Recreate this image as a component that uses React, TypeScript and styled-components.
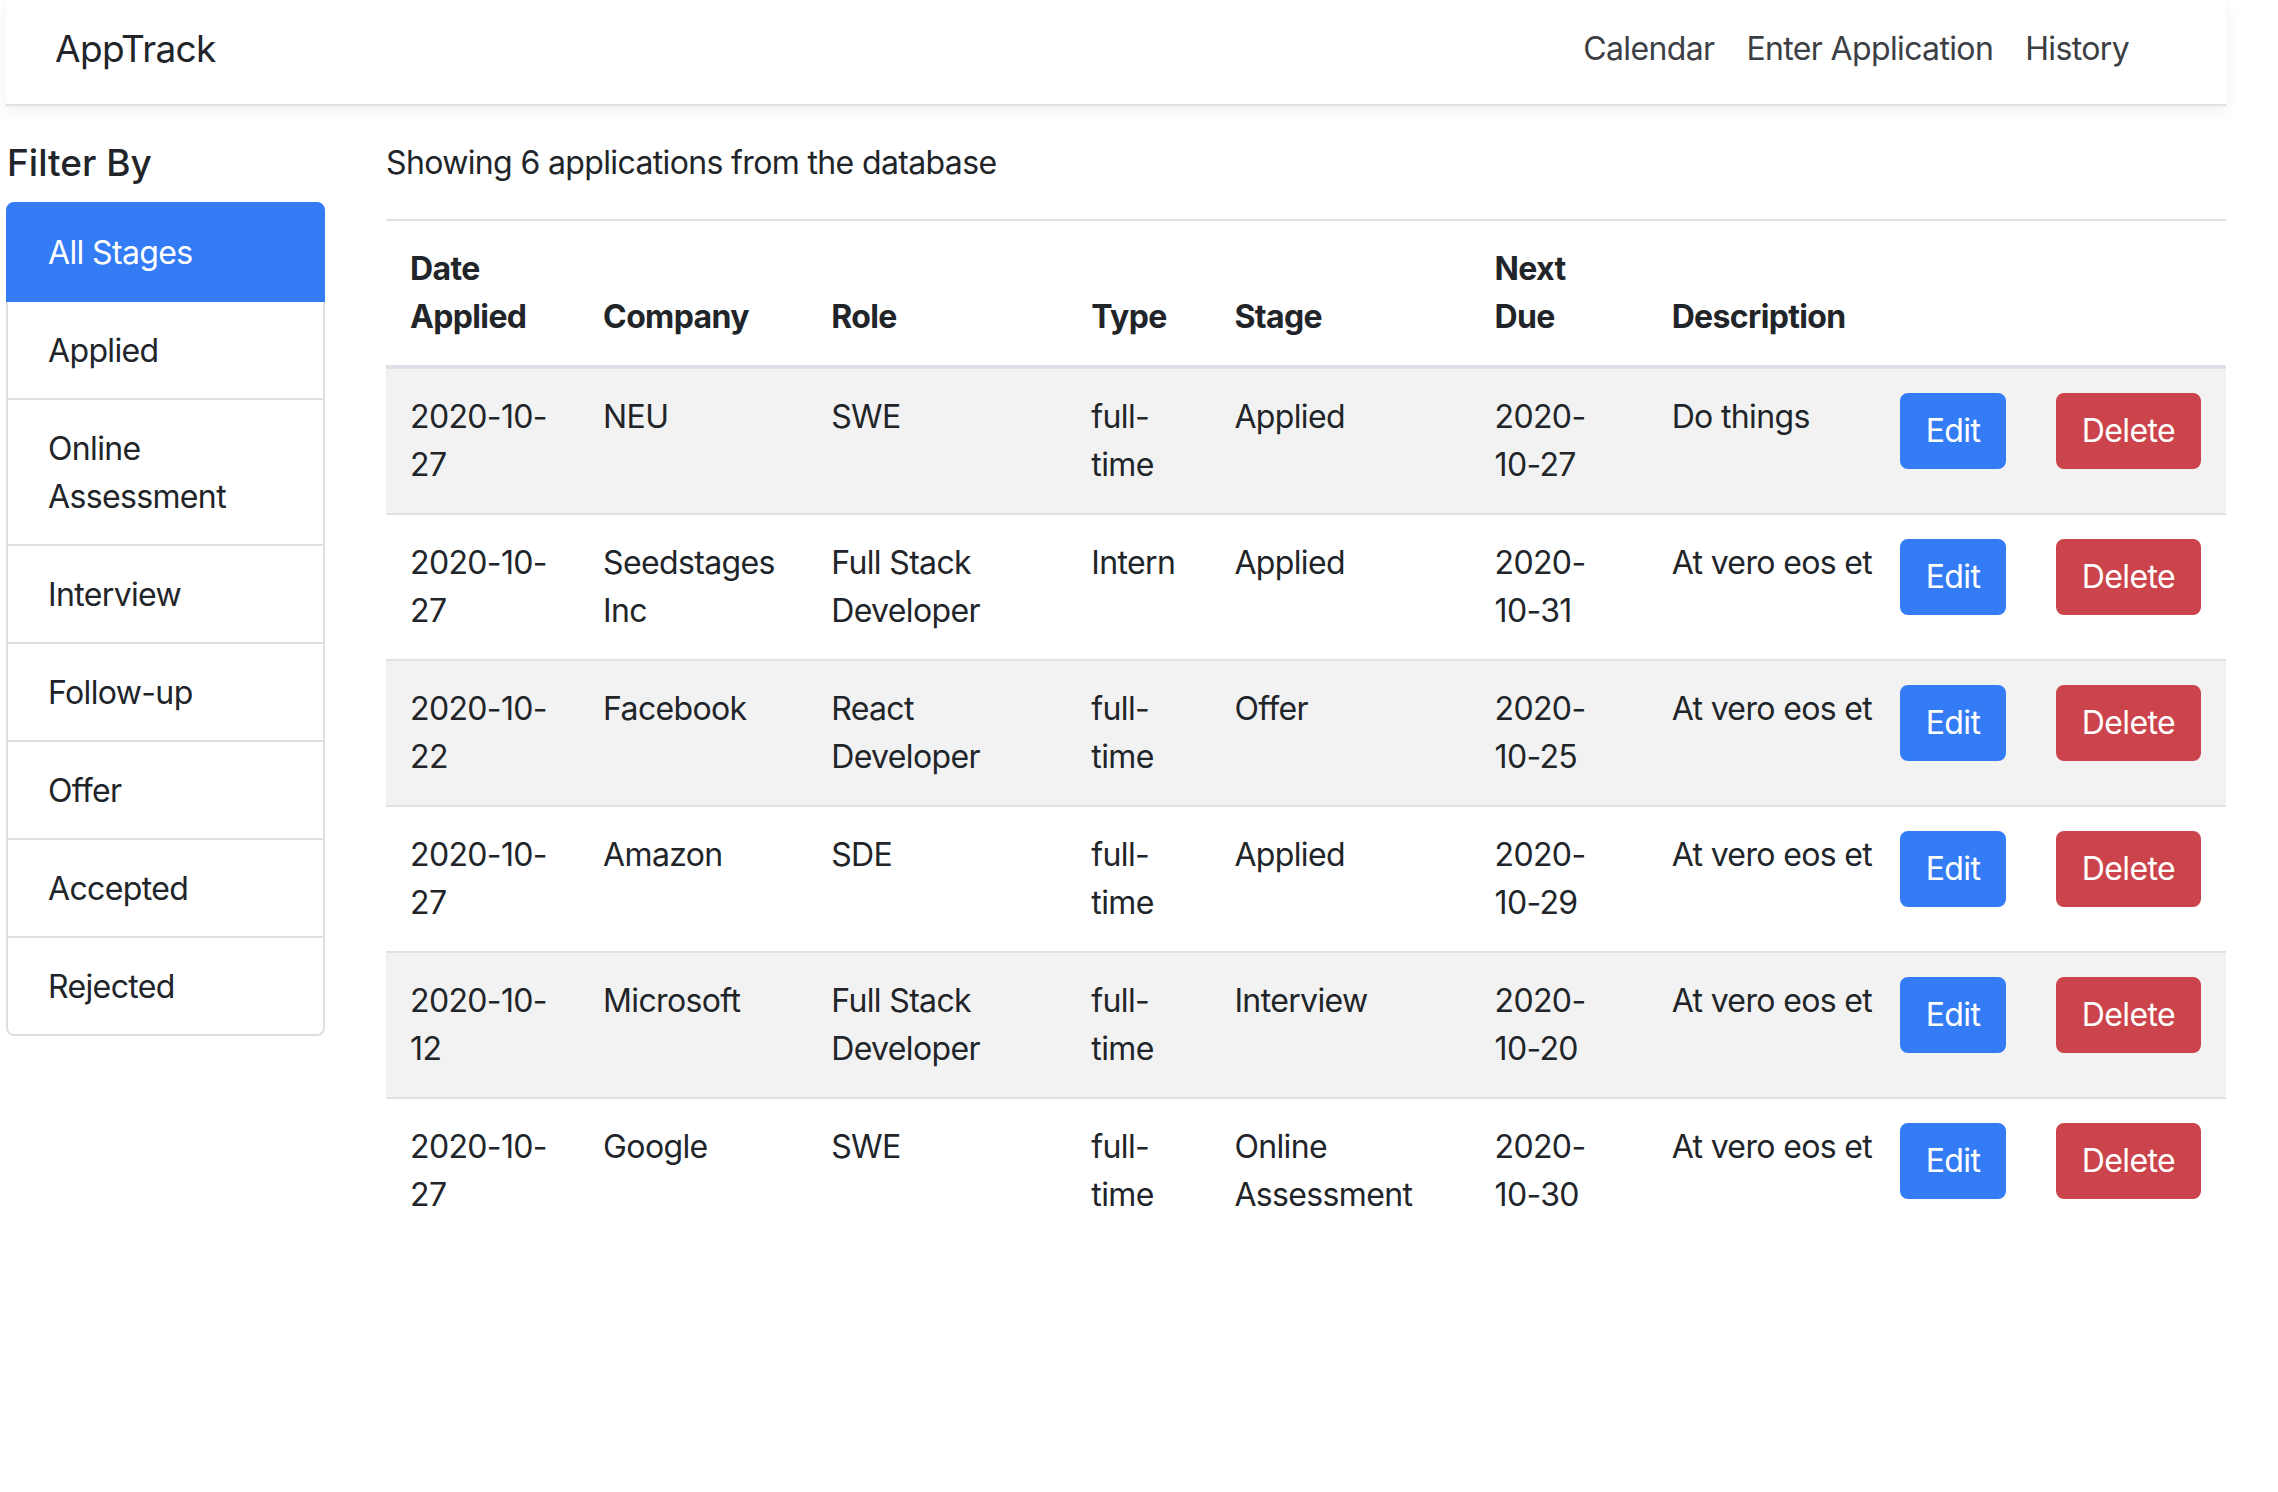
import React from "react";
import styled, { createGlobalStyle } from "styled-components";

const GlobalStyle = createGlobalStyle`
  html, body {
    margin: 0;
    padding: 0;
    background: #ffffff;
  }
  body {
    font-family: Inter, "Liberation Sans", sans-serif;
    font-size: 32px;
    line-height: 48px;
    letter-spacing: -0.02em;
    color: #212529;
  }
  *, *::before, *::after {
    box-sizing: border-box;
  }
`;

const Page = styled.div`
  width: 2220px;
  margin-left: 6px;
`;

const Navbar = styled.nav`
  height: 106px;
  display: flex;
  align-items: center;
  padding: 0 81px 7px 49px;
  background: #ffffff;
  border-bottom: 2px solid #dee2e6;
  box-shadow: 0 6px 14px rgba(0, 0, 0, 0.06);
`;

const Brand = styled.a`
  font-size: 37px;
  line-height: 56px;
  color: #212529;
  text-decoration: none;
`;

const NavLinks = styled.div`
  margin-left: auto;
  display: flex;
  align-items: center;
`;

const NavLink = styled.a`
  padding: 0 16px;
  font-size: 32px;
  line-height: 48px;
  color: #3c4045;
  text-decoration: none;
`;

const Body = styled.div`
  display: flex;
  align-items: flex-start;
`;

const Sidebar = styled.aside`
  width: 319px;
  flex-shrink: 0;
  padding-top: 35px;
`;

const FilterTitle = styled.h4`
  margin: 0 0 17px;
  padding-left: 1px;
  font-size: 37px;
  line-height: 44px;
  font-weight: 500;
  letter-spacing: 0;
`;

const StageList = styled.ul`
  list-style: none;
  margin: 0;
  padding: 0;
`;

const StageItem = styled.li<{ $active?: boolean }>`
  padding: 25px 40px 23px;
  border: 2px solid ${(p) => (p.$active ? "#337cf6" : "#dfdfdf")};
  border-top-width: 0;
  background: ${(p) => (p.$active ? "#337cf6" : "#ffffff")};
  color: ${(p) => (p.$active ? "#ffffff" : "#212529")};
  font-size: 32px;
  line-height: 48px;

  &:first-child {
    border-top-width: 2px;
    border-radius: 8px 8px 0 0;
  }
  &:last-child {
    border-radius: 0 0 8px 8px;
  }
`;

const Main = styled.main`
  flex: 1;
  margin-left: 61px;
  padding-top: 33px;
`;

const Summary = styled.p`
  margin: 0 0 32px;
  font-size: 32px;
  line-height: 48px;
`;

const Table = styled.table`
  width: 100%;
  border-collapse: collapse;
  table-layout: fixed;
`;

const HeadCell = styled.th`
  padding: 24px;
  border-top: 2px solid #dee2e6;
  border-bottom: 4px solid #dee2e6;
  vertical-align: bottom;
  text-align: left;
  font-weight: 700;
`;

const Row = styled.tr<{ $striped: boolean }>`
  background: ${(p) => (p.$striped ? "#f2f2f2" : "transparent")};
`;

const Cell = styled.td`
  padding: 24px;
  border-top: 2px solid #dee2e6;
  vertical-align: top;
`;

const DescCell = styled(Cell)`
  white-space: nowrap;
`;

const Button = styled.button<{ $variant: "primary" | "danger" }>`
  display: inline-block;
  padding: 12px 24px;
  font-family: inherit;
  font-size: 32px;
  line-height: 48px;
  letter-spacing: inherit;
  color: #ffffff;
  background: ${(p) => (p.$variant === "primary" ? "#337cf6" : "#cc444b")};
  border: 2px solid ${(p) => (p.$variant === "primary" ? "#337cf6" : "#cc444b")};
  border-radius: 8px;
  cursor: pointer;
`;

const stages = [
  "All Stages",
  "Applied",
  "Online Assessment",
  "Interview",
  "Follow-up",
  "Offer",
  "Accepted",
  "Rejected",
];

const lorem = "At vero eos et";

const apps = [
  { date: "2020-10-27", company: "NEU", role: "SWE", type: "full-time", stage: "Applied", due: "2020-10-27", desc: "Do things" },
  { date: "2020-10-27", company: "Seedstages Inc", role: "Full Stack Developer", type: "Intern", stage: "Applied", due: "2020-10-31", desc: lorem },
  { date: "2020-10-22", company: "Facebook", role: "React Developer", type: "full-time", stage: "Offer", due: "2020-10-25", desc: lorem },
  { date: "2020-10-27", company: "Amazon", role: "SDE", type: "full-time", stage: "Applied", due: "2020-10-29", desc: lorem },
  { date: "2020-10-12", company: "Microsoft", role: "Full Stack Developer", type: "full-time", stage: "Interview", due: "2020-10-20", desc: lorem },
  { date: "2020-10-27", company: "Google", role: "SWE", type: "full-time", stage: "Online Assessment", due: "2020-10-30", desc: lorem },
];

const colWidths = [193, 228, 260, 143, 260, 177, 228, 156, 194];

export default function App() {
  return (
    <>
      <GlobalStyle />
      <Page>
        <Navbar>
          <Brand href="#">AppTrack</Brand>
          <NavLinks>
            <NavLink href="#">Calendar</NavLink>
            <NavLink href="#">Enter Application</NavLink>
            <NavLink href="#">History</NavLink>
          </NavLinks>
        </Navbar>
        <Body>
          <Sidebar>
            <FilterTitle>Filter By</FilterTitle>
            <StageList>
              {stages.map((s, i) => (
                <StageItem key={s} $active={i === 0}>
                  {s}
                </StageItem>
              ))}
            </StageList>
          </Sidebar>
          <Main>
            <Summary>Showing {apps.length} applications from the database</Summary>
            <Table>
              <colgroup>
                {colWidths.map((w, i) => (
                  <col key={i} style={{ width: w }} />
                ))}
              </colgroup>
              <thead>
                <tr>
                  <HeadCell>Date Applied</HeadCell>
                  <HeadCell>Company</HeadCell>
                  <HeadCell>Role</HeadCell>
                  <HeadCell>Type</HeadCell>
                  <HeadCell>Stage</HeadCell>
                  <HeadCell>Next Due</HeadCell>
                  <HeadCell>Description</HeadCell>
                  <HeadCell />
                  <HeadCell />
                </tr>
              </thead>
              <tbody>
                {apps.map((a, i) => (
                  <Row key={i} $striped={i % 2 === 0}>
                    <Cell>{a.date}</Cell>
                    <Cell>{a.company}</Cell>
                    <Cell>{a.role}</Cell>
                    <Cell>{a.type}</Cell>
                    <Cell>{a.stage}</Cell>
                    <Cell>{a.due}</Cell>
                    <DescCell>{a.desc}</DescCell>
                    <Cell>
                      <Button $variant="primary">Edit</Button>
                    </Cell>
                    <Cell>
                      <Button $variant="danger">Delete</Button>
                    </Cell>
                  </Row>
                ))}
              </tbody>
            </Table>
          </Main>
        </Body>
      </Page>
    </>
  );
}
